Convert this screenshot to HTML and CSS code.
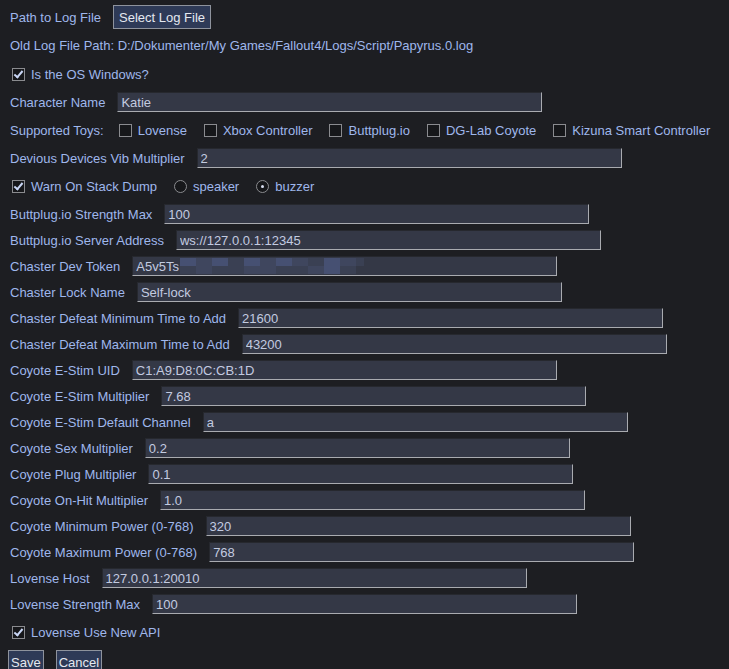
FILE: index.html
```html
<!DOCTYPE html>
<html lang="en">
<head>
  <meta charset="UTF-8">
  <title>Settings</title>
  <link rel="stylesheet" href="styles.css">
</head>
<body>
  <div class="form">
    <div class="row first">
      <span class="label">Path to Log File</span>
      <button class="btn">Select Log File</button>
    </div>
    <div class="row text">
      <span class="label">Old Log File Path: D:/Dokumenter/My Games/Fallout4/Logs/Script/Papyrus.0.log</span>
    </div>
    <div class="row tall">
      <label class="check"><span class="box on"></span>Is the OS Windows?</label>
    </div>
    <div class="row">
      <span class="label">Character Name</span>
      <input class="field" type="text" value="Katie">
    </div>
    <div class="row tall toys">
      <span class="label">Supported Toys:</span>
      <label class="check"><span class="box"></span>Lovense</label>
      <label class="check"><span class="box"></span>Xbox Controller</label>
      <label class="check"><span class="box"></span>Buttplug.io</label>
      <label class="check"><span class="box"></span>DG-Lab Coyote</label>
      <label class="check"><span class="box"></span>Kizuna Smart Controller</label>
    </div>
    <div class="row">
      <span class="label">Devious Devices Vib Multiplier</span>
      <input class="field" type="text" value="2">
    </div>
    <div class="row tall toys">
      <label class="check"><span class="box on"></span>Warn On Stack Dump</label>
      <label class="check"><span class="radio"></span>speaker</label>
      <label class="check"><span class="radio on"></span>buzzer</label>
    </div>
    <div class="row">
      <span class="label">Buttplug.io Strength Max</span>
      <input class="field" type="text" value="100">
    </div>
    <div class="row">
      <span class="label">Buttplug.io Server Address</span>
      <input class="field" type="text" value="ws://127.0.0.1:12345">
    </div>
    <div class="row">
      <span class="label">Chaster Dev Token</span>
      <div class="field token">A5v5Ts<span class="blur">
        <span class="b1"></span><span class="b2"></span><span class="b1"></span><span class="b3"></span><span class="b1"></span><span class="b2"></span>
        <span class="b1"></span><span class="b2"></span><span class="b3"></span><span class="b1"></span><span class="b2"></span><span class="b3"></span>
        <span class="b3"></span><span class="b2"></span><span class="b3"></span><span class="b3"></span><span class="b2"></span><span class="b2"></span>
        <span class="b3"></span><span class="b3"></span><span class="b2"></span><span class="b1"></span><span class="b3"></span><span class="b4"></span>
      </span></div>
    </div>
    <div class="row">
      <span class="label">Chaster Lock Name</span>
      <input class="field" type="text" value="Self-lock">
    </div>
    <div class="row">
      <span class="label">Chaster Defeat Minimum Time to Add</span>
      <input class="field" type="text" value="21600">
    </div>
    <div class="row">
      <span class="label">Chaster Defeat Maximum Time to Add</span>
      <input class="field" type="text" value="43200">
    </div>
    <div class="row">
      <span class="label">Coyote E-Stim UID</span>
      <input class="field" type="text" value="C1:A9:D8:0C:CB:1D">
    </div>
    <div class="row">
      <span class="label">Coyote E-Stim Multiplier</span>
      <input class="field" type="text" value="7.68">
    </div>
    <div class="row">
      <span class="label">Coyote E-Stim Default Channel</span>
      <input class="field" type="text" value="a">
    </div>
    <div class="row">
      <span class="label">Coyote Sex Multiplier</span>
      <input class="field" type="text" value="0.2">
    </div>
    <div class="row">
      <span class="label">Coyote Plug Multiplier</span>
      <input class="field" type="text" value="0.1">
    </div>
    <div class="row">
      <span class="label">Coyote On-Hit Multiplier</span>
      <input class="field" type="text" value="1.0">
    </div>
    <div class="row">
      <span class="label">Coyote Minimum Power (0-768)</span>
      <input class="field" type="text" value="320">
    </div>
    <div class="row">
      <span class="label">Coyote Maximum Power (0-768)</span>
      <input class="field" type="text" value="768">
    </div>
    <div class="row">
      <span class="label">Lovense Host</span>
      <input class="field" type="text" value="127.0.0.1:20010">
    </div>
    <div class="row">
      <span class="label">Lovense Strength Max</span>
      <input class="field" type="text" value="100">
    </div>
    <div class="row tall">
      <label class="check"><span class="box on"></span>Lovense Use New API</label>
    </div>
    <div class="row actions">
      <button class="btn">Save</button>
      <button class="btn">Cancel</button>
    </div>
  </div>
</body>
</html>
```

FILE: styles.css
```css
body {
  margin: 0;
  background: #1d1e22;
  font-family: 'Liberation Sans', Arial, sans-serif;
  font-size: 13px;
  color: #9fb7ec;
  overflow: hidden;
}

.form {
  display: flex;
  flex-direction: column;
  padding: 3px 0 0 10px;
}

.row {
  display: flex;
  align-items: center;
  gap: 12px;
  height: 26px;
  white-space: nowrap;
}

.row.first {
  height: 28px;
}

.row.text {
  height: 28px;
}

.row.tall {
  height: 30px;
}

.row.toys {
  gap: 17px;
}

.row.toys .label {
  margin-right: -2px;
}

.row.actions {
  height: auto;
  align-items: flex-start;
  margin: 3px 0 0 -2px;
}

.row.actions .btn {
  padding: 0 2px;
}

.label {
  color: #9fb7ec;
}

.btn {
  font-family: inherit;
  font-size: 13px;
  color: #e4e8f0;
  background: #2e3a57;
  border: 1px solid #8e939d;
  height: 24px;
  padding: 0 5px;
  margin: 0;
}

.field {
  box-sizing: border-box;
  width: 425px;
  height: 20px;
  margin: 0;
  padding: 0 3px;
  font-family: inherit;
  font-size: 13px;
  color: #c3cbe0;
  background: #343846;
  border: 1px solid;
  border-color: #26282e #a9abb0 #a9abb0 #26282e;
  outline: none;
  display: flex;
  align-items: center;
}

.token .blur {
  display: grid;
  grid-template-columns: repeat(11, 16px) 8px;
  grid-template-rows: 8px 8px;
  margin-left: 1px;
}

.blur .b1 { background: #465072; }
.blur .b2 { background: #3f465e; }
.blur .b3 { background: #3a4053; }
.blur .b4 { background: #343846; }

.check {
  display: flex;
  align-items: center;
  gap: 6px;
  color: #9fb7ec;
}

.row.tall > .check:first-child {
  margin-left: 2px;
}

.box {
  box-sizing: border-box;
  width: 13px;
  height: 13px;
  background: #16171a;
  border: 1px solid #8a8b8f;
  position: relative;
}

.box.on::after {
  content: "";
  position: absolute;
  left: 3px;
  top: 0px;
  width: 3px;
  height: 7px;
  border: solid #c9d6f5;
  border-width: 0 2px 2px 0;
  transform: rotate(40deg);
}

.radio {
  box-sizing: border-box;
  width: 13px;
  height: 13px;
  border-radius: 50%;
  background: #16171a;
  border: 1px solid #8a8b8f;
  position: relative;
}

.radio.on::after {
  content: "";
  position: absolute;
  left: 4px;
  top: 4px;
  width: 3px;
  height: 3px;
  border-radius: 50%;
  background: #d8def0;
}
```
